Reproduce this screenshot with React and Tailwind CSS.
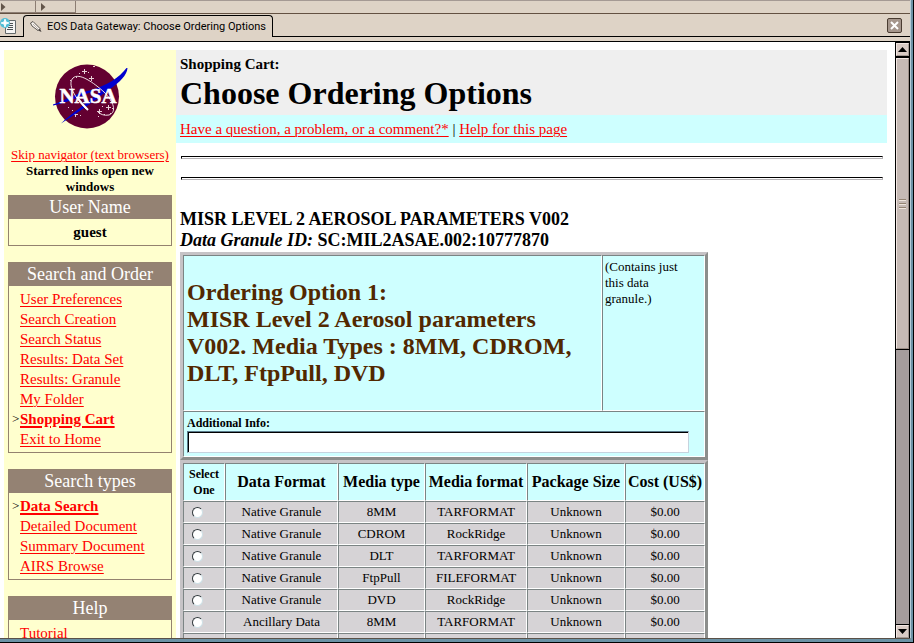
const SERIF = "font-['Liberation_Serif',serif]";

const rows = [
  ['Native Granule', '8MM', 'TARFORMAT'],
  ['Native Granule', 'CDROM', 'RockRidge'],
  ['Native Granule', 'DLT', 'TARFORMAT'],
  ['Native Granule', 'FtpPull', 'FILEFORMAT'],
  ['Native Granule', 'DVD', 'RockRidge'],
  ['Ancillary Data', '8MM', 'TARFORMAT'],
];

const CELL =
  'border border-t-[#7b8484] border-l-[#7b8484] border-r-white border-b-white';
const TABLE =
  'w-[528px] table-fixed border-separate border-spacing-0 border-[3px] border-t-[#c6c3c6] border-l-[#c6c3c6] border-r-[#8c8e8c] border-b-[#8c8e8c]';

function Link({ children, bold }) {
  return (
    <a
      href="#"
      className={
        'text-[#ff0000] underline underline-offset-2 ' +
        (bold ? 'font-bold decoration-2' : 'decoration-1')
      }
    >
      {children}
    </a>
  );
}

function NavBox({ title, links, current, children }) {
  return (
    <section className="border border-[#94826f]">
      <h2 className="h-[23px] bg-[#948273] text-center text-[18px] leading-[22px] text-white">
        {title}
      </h2>
      {children}
      {links && (
        <ul className="py-[3px] pl-[11px] text-[15px] leading-5">
          {links.map((l) => (
            <li key={l} className="flex">
              <span className="-ml-2 w-2 text-[13px] text-black">{l === current ? '>' : ''}</span>
              <Link bold={l === current}>{l}</Link>
            </li>
          ))}
        </ul>
      )}
    </section>
  );
}

function NasaLogo() {
  return (
    <svg viewBox="50 60 80 72" className="mx-auto h-[72px] w-20" role="img" aria-label="NASA">
      <circle cx="87" cy="96.500" r="32" fill="#630031" />
      <g fill="#e7cfd6">
        <path d="M84 69h1v2h2v1h-2v2h-1v-2h-2v-1h2zM91 76h1v2h2v1h-2v2h-1v-2h-2v-1h2zM93 66h2v1h-2zM79 73h1v1h-1zM76 77h1v1h-1zM88 72h1v1h-1zM70 80h1v1h-1zM75 112h1v2h2v1h-2v2h-1v-2h-2v-1h2zM68 107h1v1h-1zM72 110h1v1h-1zM80 115h1v1h-1zM99 109h1v2h2v1h-2v2h-1v-2h-2v-1h2zM108 105h1v2h2v1h-2v2h-1v-2h-2v-1h2zM104 114h1v1h-1zM112 108h1v1h-1zM98 116h1v1h-1zM110 113h1v1h-1zM102 106h1v1h-1z" />
      </g>
      <path
        d="M53 104.500C66 100 78 92 92 90C107 85 119 78 126.500 68H127.500C127 75 120 82 110 89L104 94L100 90C86 92 72 102 53 105.500Z"
        fill="#0000ce"
      />
      <path d="M61 123.500C72 113 86 104 101 91L108 90C92 103 76 114 61 123.500Z" fill="#0000ce" />
      <path
        d="M86 109C75 98 67 84 73 78C79 72 94 83 104 92C114 102 117 112 109 115C104 116 100 114 98 112"
        fill="none"
        stroke="#f0dfe4"
        strokeWidth="1"
      />
      <path d="M77 97Q81 103 88 110" fill="none" stroke="#fff" strokeWidth="2" />
      <text
        x="88"
        y="103"
        textAnchor="middle"
        fill="#fff"
        stroke="#fff"
        strokeWidth="0.5"
        className="font-['Liberation_Serif',serif] text-[21px] font-bold"
      >
        NASA
      </text>
    </svg>
  );
}

function PenIcon() {
  return (
    <svg viewBox="0 0 12 12" className="size-3" aria-hidden="true">
      <path d="M0.500 2L3 0.500L10 7.500L8 9.500L2 5Z" fill="#f7f3ef" stroke="#4a4542" strokeWidth="0.900" />
      <path d="M8 9.500L10 7.500L11.500 11Z" fill="#4a4542" />
      <path d="M3 3L8 8" stroke="#b5aaa5" strokeWidth="0.900" />
    </svg>
  );
}

function PageIcon() {
  return (
    <svg viewBox="0 0 17 17" className="h-[17px] w-[17px]" aria-hidden="true">
      <path d="M5.500 2.500H15.500V15.500H5.500Z" fill="#f4f4f4" stroke="#63696b" />
      <path d="M9 5.500H13M9 7.500H13M8 9.500H13M7 11.500H13" stroke="#4a5154" />
      <circle cx="5" cy="5" r="5" fill="#52bed6" />
      <path d="M5 1L6 4L9 5L6 6L5 9L4 6L1 5L4 4Z" fill="#fff" stroke="#fff" strokeWidth="0.800" />
    </svg>
  );
}

function ToolbarArrow({ className }) {
  return (
    <button aria-label="Expand" className={'h-3 border-r border-b border-[#8c7d73] ' + className}>
      <svg viewBox="0 0 5 8" className="h-2 w-[5px]">
        <path d="M0 0L4.500 4L0 8Z" fill="#63554a" />
      </svg>
    </button>
  );
}

function ScrollBar() {
  const btn =
    'flex h-[13px] shrink-0 items-center justify-center border-t border-l border-[#f2e6e2] border-r-[#a59a94] border-b-[#a59a94] border-r border-b bg-[#d9cbc5]';
  return (
    <div className="flex w-[15px] shrink-0 flex-col border-x border-black bg-[#a59c9c]">
      <div className="h-px bg-black" />
      <button aria-label="Scroll up" className={btn}>
        <svg viewBox="0 0 9 5" className="h-[5px] w-[9px]">
          <path d="M0 5L4.500 0L9 5Z" />
        </svg>
      </button>
      <div className="flex h-[294px] flex-col items-center border-t-2 border-b border-black">
        <div className="flex w-full flex-1 flex-col items-center justify-center gap-[2px] border border-t-[#f2e6e2] border-r-[#9c8e87] border-b-[#9c8e87] border-l-[#f2e6e2] bg-[#c6bab5]">
          <div className="h-[2px] w-[7px] border-t border-[#948473] bg-[#efe6de]" />
          <div className="h-[2px] w-[7px] border-t border-[#948473] bg-[#efe6de]" />
          <div className="h-[2px] w-[7px] border-t border-[#948473] bg-[#efe6de]" />
        </div>
      </div>
      <div className="flex-1" />
      <div className="h-px bg-black" />
      <button aria-label="Scroll down" className={btn}>
        <svg viewBox="0 0 9 5" className="h-[5px] w-[9px]">
          <path d="M0 0L4.500 5L9 0Z" />
        </svg>
      </button>
    </div>
  );
}

export default function App() {
  return (
    <div className="flex h-screen flex-col overflow-hidden border-r border-b border-black bg-[#ded3c6]">
      <div className="flex min-h-0 flex-1 flex-col border-r-2 border-b-[3px] border-[#6b92a5]">
        <div className="flex min-h-0 flex-1 flex-col border-r border-b border-r-[#b5cbd6] border-b-[#5a5148]">
          <div className="flex h-[14px] shrink-0 border-t border-b border-t-[#a59a94] border-b-[#635142]">
            <ToolbarArrow className="w-9 pl-px" />
            <ToolbarArrow className="w-10 pl-[5px]" />
          </div>

          <div className="flex h-[23px] shrink-0 font-[Roboto,sans-serif]">
            <button aria-label="New tab" className="w-[23px] border-b border-black pt-[3px]">
              <PageIcon />
            </button>
            <button className="mt-px flex items-center gap-[5px] rounded-t border border-b-0 border-black pr-[6px] pl-[6px] text-[11px] leading-[20px] text-black">
              <PenIcon />
              <span>EOS Data Gateway: Choose Ordering Options</span>
            </button>
            <div className="flex flex-1 items-center justify-end border-b border-black pr-2">
              <button
                aria-label="Close tab"
                className="flex size-[15px] items-center justify-center rounded-[2px] border border-[#4a3c31] bg-[#a5968c]"
              >
                <svg viewBox="0 0 9 9" className="size-[9px]">
                  <path d="M1 1L8 8M8 1L1 8" stroke="#fff" strokeWidth="2" />
                </svg>
              </button>
            </div>
          </div>
          <div className="h-[5px] shrink-0 border-b border-black" />

          <div className={'flex min-h-0 flex-1 bg-white text-black ' + SERIF}>
            <div className="flex min-w-0 flex-1 overflow-hidden pt-2 pr-2 pl-1">
              <nav className="w-[172px] shrink-0 bg-[#ffffce] px-1 pt-[10px]">
                <NasaLogo />
                <div className="mt-[15px] text-center text-[13px] leading-4">
                  <div className="-mx-1 whitespace-nowrap">
                    <Link>Skip navigator (text browsers)</Link>
                  </div>
                  <p className="px-3 font-bold">Starred links open new windows</p>
                </div>
                <div className="flex flex-col gap-4">
                  <NavBox title="User Name">
                    <p className="py-[3px] text-center text-[15px] leading-5 font-bold">guest</p>
                  </NavBox>
                  <NavBox
                    title="Search and Order"
                    current="Shopping Cart"
                    links={[
                      'User Preferences',
                      'Search Creation',
                      'Search Status',
                      'Results: Data Set',
                      'Results: Granule',
                      'My Folder',
                      'Shopping Cart',
                      'Exit to Home',
                    ]}
                  />
                  <NavBox
                    title="Search types"
                    current="Data Search"
                    links={['Data Search', 'Detailed Document', 'Summary Document', 'AIRS Browse']}
                  />
                  <NavBox title="Help" links={['Tutorial']} />
                </div>
              </nav>

              <main className="min-w-0 flex-1">
                <header className="h-[65px] bg-[#efefef] pt-1 pl-1">
                  <p className="text-[15px] leading-5 font-bold">Shopping Cart:</p>
                  <h1 className="text-[32px] leading-[38px] font-bold">Choose Ordering Options</h1>
                </header>
                <div className="h-7 bg-[#ceffff] pl-1 text-[15px] leading-7">
                  <Link>Have a question, a problem, or a comment?*</Link> |{' '}
                  <Link>Help for this page</Link>
                </div>
                <hr className="mt-[13px] mr-1 ml-[5px] h-[3px] border border-t-black border-r-[#b5b2b5] border-b-[#b5b2b5] border-l-black" />
                <hr className="mt-[18px] mr-1 ml-[5px] h-[3px] border border-t-black border-r-[#b5b2b5] border-b-[#b5b2b5] border-l-black" />

                <div className="mt-[29px] ml-1 text-[18px] leading-[21px] font-bold">
                  <p>MISR LEVEL 2 AEROSOL PARAMETERS V002</p>
                  <p>
                    <em>Data Granule ID:</em> SC:MIL2ASAE.002:10777870
                  </p>
                </div>

                <div className="mt-px ml-1">
                  <table className={TABLE + ' bg-[#ceffff]'}>
                    <colgroup>
                      <col className="w-[419px]" />
                      <col />
                    </colgroup>
                    <tbody>
                      <tr className="h-[156px]">
                        <td className={CELL + ' pr-5 pl-[3px] align-middle'}>
                          <h2 className="text-2xl leading-[27px] font-bold text-[#522800]">
                            Ordering Option 1:
                            <br />
                            MISR Level 2 Aerosol parameters V002. Media Types : 8MM, CDROM, DLT,
                            FtpPull, DVD
                          </h2>
                        </td>
                        <td className={CELL + ' pt-[3px] pr-4 pl-[2px] align-top text-[13px] leading-4'}>
                          (Contains just this data granule.)
                        </td>
                      </tr>
                      <tr className="h-[46px]">
                        <td colSpan={2} className={CELL + ' pr-[15px] pl-[3px] align-top'}>
                          <label htmlFor="info" className="block pt-[3px] text-[12px] leading-4 font-bold">
                            Additional Info:
                          </label>
                          <input
                            id="info"
                            type="text"
                            className="block h-[22px] w-full border border-t-[#5a7b8c] border-r-[#c6d3de] border-b-[#c6d3de] border-l-[#5a7b8c] bg-white px-1 text-[13px] shadow-[inset_1px_1px_0_#000]"
                          />
                        </td>
                      </tr>
                    </tbody>
                  </table>

                  <table className={TABLE + ' bg-[#d6d3d6] text-center text-[13px]'}>
                    <colgroup>
                      <col className="w-[42px]" />
                      <col className="w-[113px]" />
                      <col className="w-[87px]" />
                      <col className="w-[102px]" />
                      <col className="w-[98px]" />
                      <col />
                    </colgroup>
                    <thead>
                      <tr className="h-[38px] bg-[#ceffff] text-[16px] whitespace-nowrap">
                        <th className={CELL + ' text-[12px] leading-4'}>
                          Select
                          <br />
                          One
                        </th>
                        <th className={CELL}>Data Format</th>
                        <th className={CELL}>Media type</th>
                        <th className={CELL}>Media format</th>
                        <th className={CELL}>Package Size</th>
                        <th className={CELL}>Cost (US$)</th>
                      </tr>
                    </thead>
                    <tbody>
                      {rows.map(([format, type, media], i) => (
                        <tr key={i} className="h-[22px] leading-4">
                          <td className={CELL + ' pl-2'}>
                            <input
                              type="radio"
                              name="option"
                              aria-label={format + ' ' + type}
                              className="block size-[11px] appearance-none rounded-full border border-t-[#31383c] border-r-[#cee0e6] border-b-[#cee0e6] border-l-[#31383c] bg-white"
                            />
                          </td>
                          <td className={CELL}>{format}</td>
                          <td className={CELL}>{type}</td>
                          <td className={CELL}>{media}</td>
                          <td className={CELL}>Unknown</td>
                          <td className={CELL}>$0.00</td>
                        </tr>
                      ))}
                      <tr className="h-[22px]">
                        <td className={CELL} />
                        <td className={CELL} />
                        <td className={CELL} />
                        <td className={CELL} />
                        <td className={CELL} />
                        <td className={CELL} />
                      </tr>
                    </tbody>
                  </table>
                </div>
              </main>
            </div>
            <ScrollBar />
          </div>
        </div>
      </div>
    </div>
  );
}
